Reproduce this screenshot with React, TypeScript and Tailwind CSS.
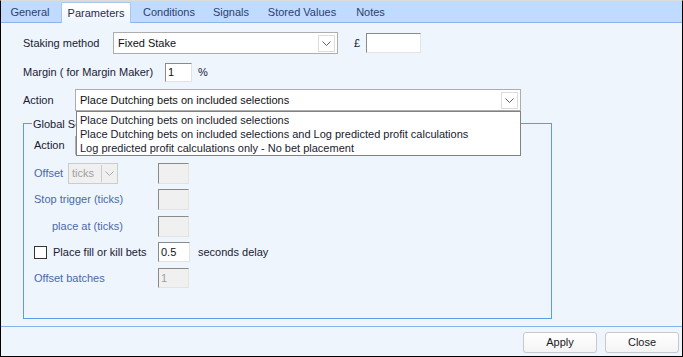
import React from 'react'

const FONT = { fontFamily: '"Liberation Sans", Arial, sans-serif' }

function Chevron({ color = '#606060' }: { color?: string }) {
  return (
    <svg width="9" height="5" viewBox="0 0 9 5" className="block">
      <path d="M0.5 0.5 L4.5 4.5 L8.5 0.5" fill="none" stroke={color} strokeWidth="1" />
    </svg>
  )
}

function Select({ value, width, height, btn = 17 }: { value: string; width: number; height: number; btn?: number }) {
  return (
    <div
      className="flex items-center bg-white border border-[#adadad] text-[#111]"
      style={{ width, height }}
    >
      <span className="flex-1 pl-[4px] truncate">{value}</span>
      <div
        className="flex items-center justify-center border border-[#dcdcdc] bg-white mr-[2px]"
        style={{ width: btn, height: height - 5 }}
      >
        <Chevron />
      </div>
    </div>
  )
}

function TextBox({ value = '', width, height, disabled }: { value?: string; width: number; height: number; disabled?: boolean }) {
  return (
    <div
      className={`flex items-center pl-[2px] border border-[#8a8a8a] border-b-[#e3e3e3] border-r-[#e3e3e3] ${
        disabled ? 'bg-[#f0f0f0] text-[#a0a0a0]' : 'bg-white text-[#111]'
      }`}
      style={{ width, height }}
    >
      {value}
    </div>
  )
}

const TABS = [
  { label: 'General', w: 58 },
  { label: 'Parameters', w: 70, active: true },
  { label: 'Conditions', w: 76 },
  { label: 'Signals', w: 48 },
  { label: 'Stored Values', w: 94 },
  { label: 'Notes', w: 43 },
]

export default function App() {
  return (
    <div
      className="relative w-[683px] h-[357px] flex flex-col bg-[#eef5fd] border-l border-r border-b border-black border-t border-t-[#dcdcdc] text-[11px] text-[#1a1a33] overflow-hidden"
      style={FONT}
    >
      {/* tab strip */}
      <div className="h-[22px] flex items-end bg-[#bfdbff] border-b border-[#8cb4ec]">
        {TABS.map((t, i) => (
          <div
            key={t.label}
            className={
              t.active
                ? 'h-[21px] -mb-px flex items-center justify-center bg-gradient-to-b from-white to-[#eef5fd] border border-b-0 border-[#a9c6ea] rounded-t-[2px] text-[#2a2a55]'
                : 'h-[20px] flex items-center justify-center text-[#2c3e6e]'
            }
            style={{ width: t.w, marginLeft: i === 1 ? 2 : 0 }}
          >
            {t.label}
          </div>
        ))}
      </div>

      {/* form */}
      <div className="pl-[22px] pt-[9px] flex flex-col">
        <div className="h-[22px] flex items-center">
          <span className="w-[90px]">Staking method</span>
          <Select value="Fixed Stake" width={225} height={22} />
          <span className="ml-[16px] w-[12px]">£</span>
          <TextBox width={55} height={20} />
        </div>

        <div className="mt-[8px] h-[20px] flex items-center">
          <span className="w-[142px]">Margin ( for Margin Maker)</span>
          <TextBox value="1" width={27} height={19} />
          <span className="ml-[6px]">%</span>
        </div>

        <div className="mt-[7px] h-[22px] flex items-center">
          <span className="w-[52px]">Action</span>
          <Select value="Place Dutching bets on included selections" width={446} height={22} />
        </div>

        {/* group box */}
        <div className="relative mt-[12px] w-[529px] h-[196px] border border-[#5b9bea] flex flex-col pl-[10px] pt-[12px]">
          <span className="absolute left-[8px] -top-[8px] w-[44px] overflow-hidden whitespace-nowrap px-[1px] bg-[#eef5fd]">
            Global Settings
          </span>

          <div className="h-[19px] flex items-center">
            <span className="w-[41px]">Action</span>
            <div className="w-[224px] h-[19px] border border-[#adadad] border-b-[#eef5fd] bg-white flex justify-end">
              <div className="w-[17px] h-full border border-[#707070] bg-[#e8e8e8]" />
            </div>
            <span className="ml-[70px] leading-[14px] h-[19px] pt-[4px]">Trailing</span>
          </div>

          <div className="mt-[8px] h-[21px] flex items-center">
            <span className="w-[34px] text-[#4a6aa8]">Offset</span>
            <div className="w-[50px] h-[21px] flex items-center bg-[#f0f0f0] border border-[#cccccc] text-[#a0a0a0]">
              <span className="flex-1 pl-[3px]">ticks</span>
              <div className="w-[15px] h-[17px] mr-[1px] flex items-center justify-center border-l border-[#cccccc]">
                <Chevron color="#a8a8a8" />
              </div>
            </div>
            <div className="ml-[40px]">
              <TextBox width={31} height={21} disabled />
            </div>
          </div>

          <div className="mt-[5px] h-[21px] flex items-center">
            <span className="w-[124px] text-[#4a6aa8]">Stop trigger (ticks)</span>
            <TextBox width={31} height={21} disabled />
          </div>

          <div className="mt-[6px] h-[21px] flex items-center">
            <span className="w-[124px] pl-[18px] text-[#4a6aa8]">place at (ticks)</span>
            <TextBox width={31} height={21} disabled />
          </div>

          <div className="mt-[5px] h-[20px] flex items-center">
            <div className="w-[13px] h-[13px] border border-[#333] bg-white" />
            <span className="w-[111px] pl-[6px]">Place fill or kill bets</span>
            <TextBox value="0.5" width={32} height={20} />
            <span className="ml-[8px]">seconds delay</span>
          </div>

          <div className="mt-[6px] h-[20px] flex items-center">
            <span className="w-[124px] text-[#4a6aa8]">Offset batches</span>
            <TextBox value="1" width={31} height={20} disabled />
          </div>
        </div>
      </div>

      {/* footer */}
      <div className="mt-auto border-t border-[#84b2ea] pt-[5px] pb-[3px] pr-[3px] flex justify-end gap-[8px]">
        {['Apply', 'Close'].map(b => (
          <div
            key={b}
            className="w-[74px] h-[21px] flex items-center justify-center rounded-[3px] border border-[#c8c8c8] bg-gradient-to-b from-white to-[#f4f4f4] text-[#1a1a1a]"
          >
            {b}
          </div>
        ))}
      </div>

      {/* open dropdown list */}
      <div className="absolute left-[75px] top-[110px] w-[445px] h-[45px] bg-white border border-[#828282] pt-[1px] pl-[3px] text-[#1a1a2e]">
        <div className="h-[14px] leading-[14px]">Place Dutching bets on included selections</div>
        <div className="h-[14px] leading-[14px]">Place Dutching bets on included selections and Log predicted profit calculations</div>
        <div className="h-[14px] leading-[14px]">Log predicted profit calculations only - No bet placement</div>
      </div>
    </div>
  )
}
